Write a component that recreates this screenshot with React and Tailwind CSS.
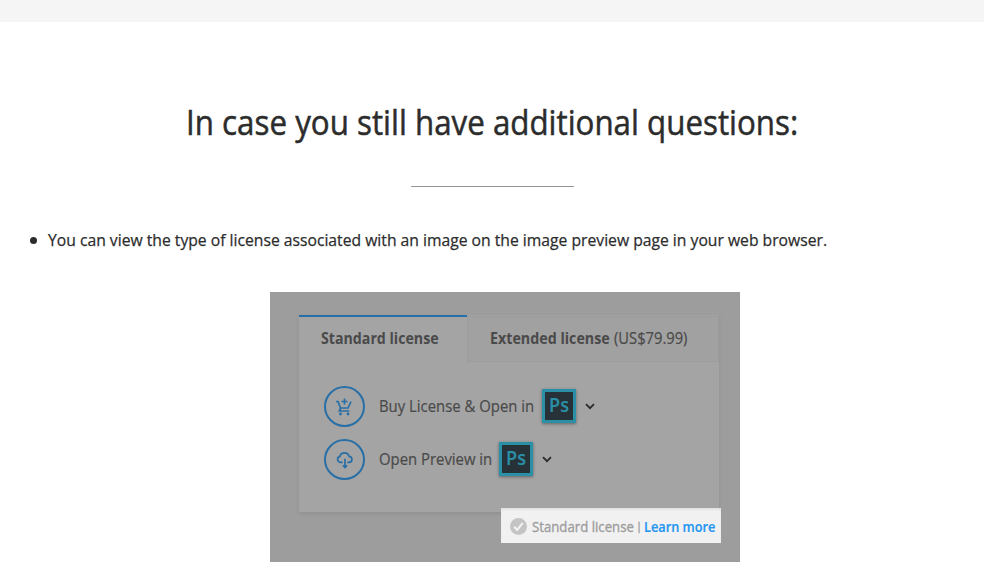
const tabs = {
  active: "Standard license",
  other: "Extended license",
  price: "(US$79.99)",
};

function CartIcon() {
  return (
    <svg className="mr-px shrink-0" width="18" height="20" viewBox="0 0 18 20" fill="none" stroke="#276fa6" strokeWidth="1.7">
      <path d="M1 4.500h2l2.500 6.500h7.500l3-6.500" />
      <path d="M5.800 11l-1.500 3h10" />
      <path d="M9.500 1.500v6M6.500 4.500h6" />
      <circle cx="5.500" cy="17" r="1.400" fill="#276fa6" stroke="none" />
      <circle cx="13" cy="17" r="1.400" fill="#276fa6" stroke="none" />
    </svg>
  );
}

function CloudIcon() {
  return (
    <svg className="shrink-0" width="18" height="19" viewBox="0 0 20 20" fill="none" stroke="#276fa6" strokeWidth="1.9">
      <path d="M7.400 13.200H4.900a3.400 3.400 0 0 1-.5-6.700C5 3.900 7 2.600 9.500 2.600c2.600 0 4.500 1.500 5.100 4a3.350 3.350 0 0 1 .5 6.600h-2.500" />
      <path d="M10 9.200v9.300M7.700 16.600l2.300 2.300 2.300-2.300" />
    </svg>
  );
}

function Chevron() {
  return (
    <svg width="10" height="7" viewBox="0 0 10 7" fill="none" stroke="#2b2b2b" strokeWidth="1.8">
      <path d="M1 1.200l4 4 4-4" />
    </svg>
  );
}

function PsBadge() {
  return (
    <span className="mb-[2px] flex h-[34px] w-[34px] justify-center border-3 border-[#2b8fa6] bg-[#263238] text-[20px] leading-[26px] font-semibold text-[#2b8fa6] shadow-[0_1px_3px_rgba(0,0,0,0.4)]">
      <span className="scale-x-[0.9]">Ps</span>
    </span>
  );
}

function Action({ icon, children }) {
  return (
    <div className="flex h-[41px] items-center">
      <span className="mr-[14px] flex h-[41px] w-[41px] items-center justify-center rounded-full border-2 border-[#276fa6]">
        {icon}
      </span>
      {children}
      <PsBadge />
      <span className="ml-[9px]"><Chevron /></span>
    </div>
  );
}

export default function App() {
  return (
    <div className="h-[580px] w-[984px] overflow-hidden bg-white font-['Open_Sans',sans-serif] whitespace-nowrap text-[#2c2c2c]">
      <div className="h-[22px] bg-[#f5f5f5]" />

      <h1 className="ml-[186px] mt-[76px] h-[50px] w-[612px] text-[34px] leading-[49px] [-webkit-text-stroke:0.5px_#2c2c2c]">
        <span className="inline-block origin-left scale-x-[0.921]">In case you still have additional questions:</span>
      </h1>
      <div className="ml-[411px] mt-[38px] h-px w-[163px] bg-[#959595]" />

      <ul className="mt-[41px] pl-[30px]">
        <li className="flex h-[24px] items-center text-[16.5px] leading-[24px] [-webkit-text-stroke:0.25px_#2c2c2c]">
          <span className="mr-[11px] h-[7px] w-[7px] rounded-full bg-[#2c2c2c]" />
          <span className="inline-block origin-left scale-x-[0.951]">
            You can view the type of license associated with an image on the image preview page in your web browser.
          </span>
        </li>
      </ul>

      <div className="relative ml-[270px] mt-[40px] h-[270px] w-[470px] bg-[#9d9d9d] pl-[29px] pt-[23px] text-[#4a4a4a]">
        <div className="h-[197px] w-[420px] bg-[#a4a4a4] shadow-[0_2px_4px_rgba(0,0,0,0.08)]">
          <div className="flex h-[47px]">
            <div className="w-[168px] border-t-2 border-[#276fa6] pl-[22px] text-[15.5px] leading-[42px] font-bold">
              <span className="inline-block origin-left scale-x-[0.915]">{tabs.active}</span>
            </div>
            <div className="mt-px flex w-[252px] border border-[#9c9c9c] bg-[#a1a1a1] pl-[22px] text-[15.5px] leading-[42px]">
              <span className="w-[124px] font-bold">
                <span className="inline-block origin-left scale-x-[0.92]">{tabs.other}</span>
              </span>
              <span className="inline-block origin-left scale-x-[0.95] [-webkit-text-stroke:0.2px]">{tabs.price}</span>
            </div>
          </div>

          <div className="flex flex-col gap-3 pl-[25px] pt-[24px] text-[15.5px] [-webkit-text-stroke:0.2px]">
            <Action icon={<CartIcon />}>
              <span className="w-[163px]">
                <span className="inline-block origin-left scale-x-[0.96]">Buy License &amp; Open in</span>
              </span>
            </Action>
            <Action icon={<CloudIcon />}>
              <span className="w-[120px]">
                <span className="inline-block origin-left scale-x-[0.96]">Open Preview in</span>
              </span>
            </Action>
          </div>
        </div>

        {/* license note sits over the dimmed card */}
        <div className="absolute left-[231px] top-[216px] flex h-[35px] w-[220px] items-center bg-[#f1f1f1] pl-[9px] pt-[2px] text-[14.5px] shadow-[inset_0_2px_2px_rgba(0,0,0,0.06)]">
          <svg className="shrink-0" width="17" height="17" viewBox="0 0 17 17">
            <circle cx="8.5" cy="8.5" r="8.5" fill="#c4c4c4" />
            <path d="M4.200 8.700l3 3.200 5.600-7" fill="none" stroke="#f1f1f1" strokeWidth="2.200" />
          </svg>
          <span className="ml-[5px] flex w-[112px] shrink-0 items-center text-[#9d9d9d] [-webkit-text-stroke:0.35px]">
            <span className="inline-block w-[104px] origin-left scale-x-[0.91]">Standard license</span>
            <span className="text-[11px]">|</span>
          </span>
          <span className="inline-block origin-left scale-x-[0.88] font-semibold text-[#2496f0] [-webkit-text-stroke:0.2px]">Learn more</span>
        </div>
      </div>
    </div>
  );
}
